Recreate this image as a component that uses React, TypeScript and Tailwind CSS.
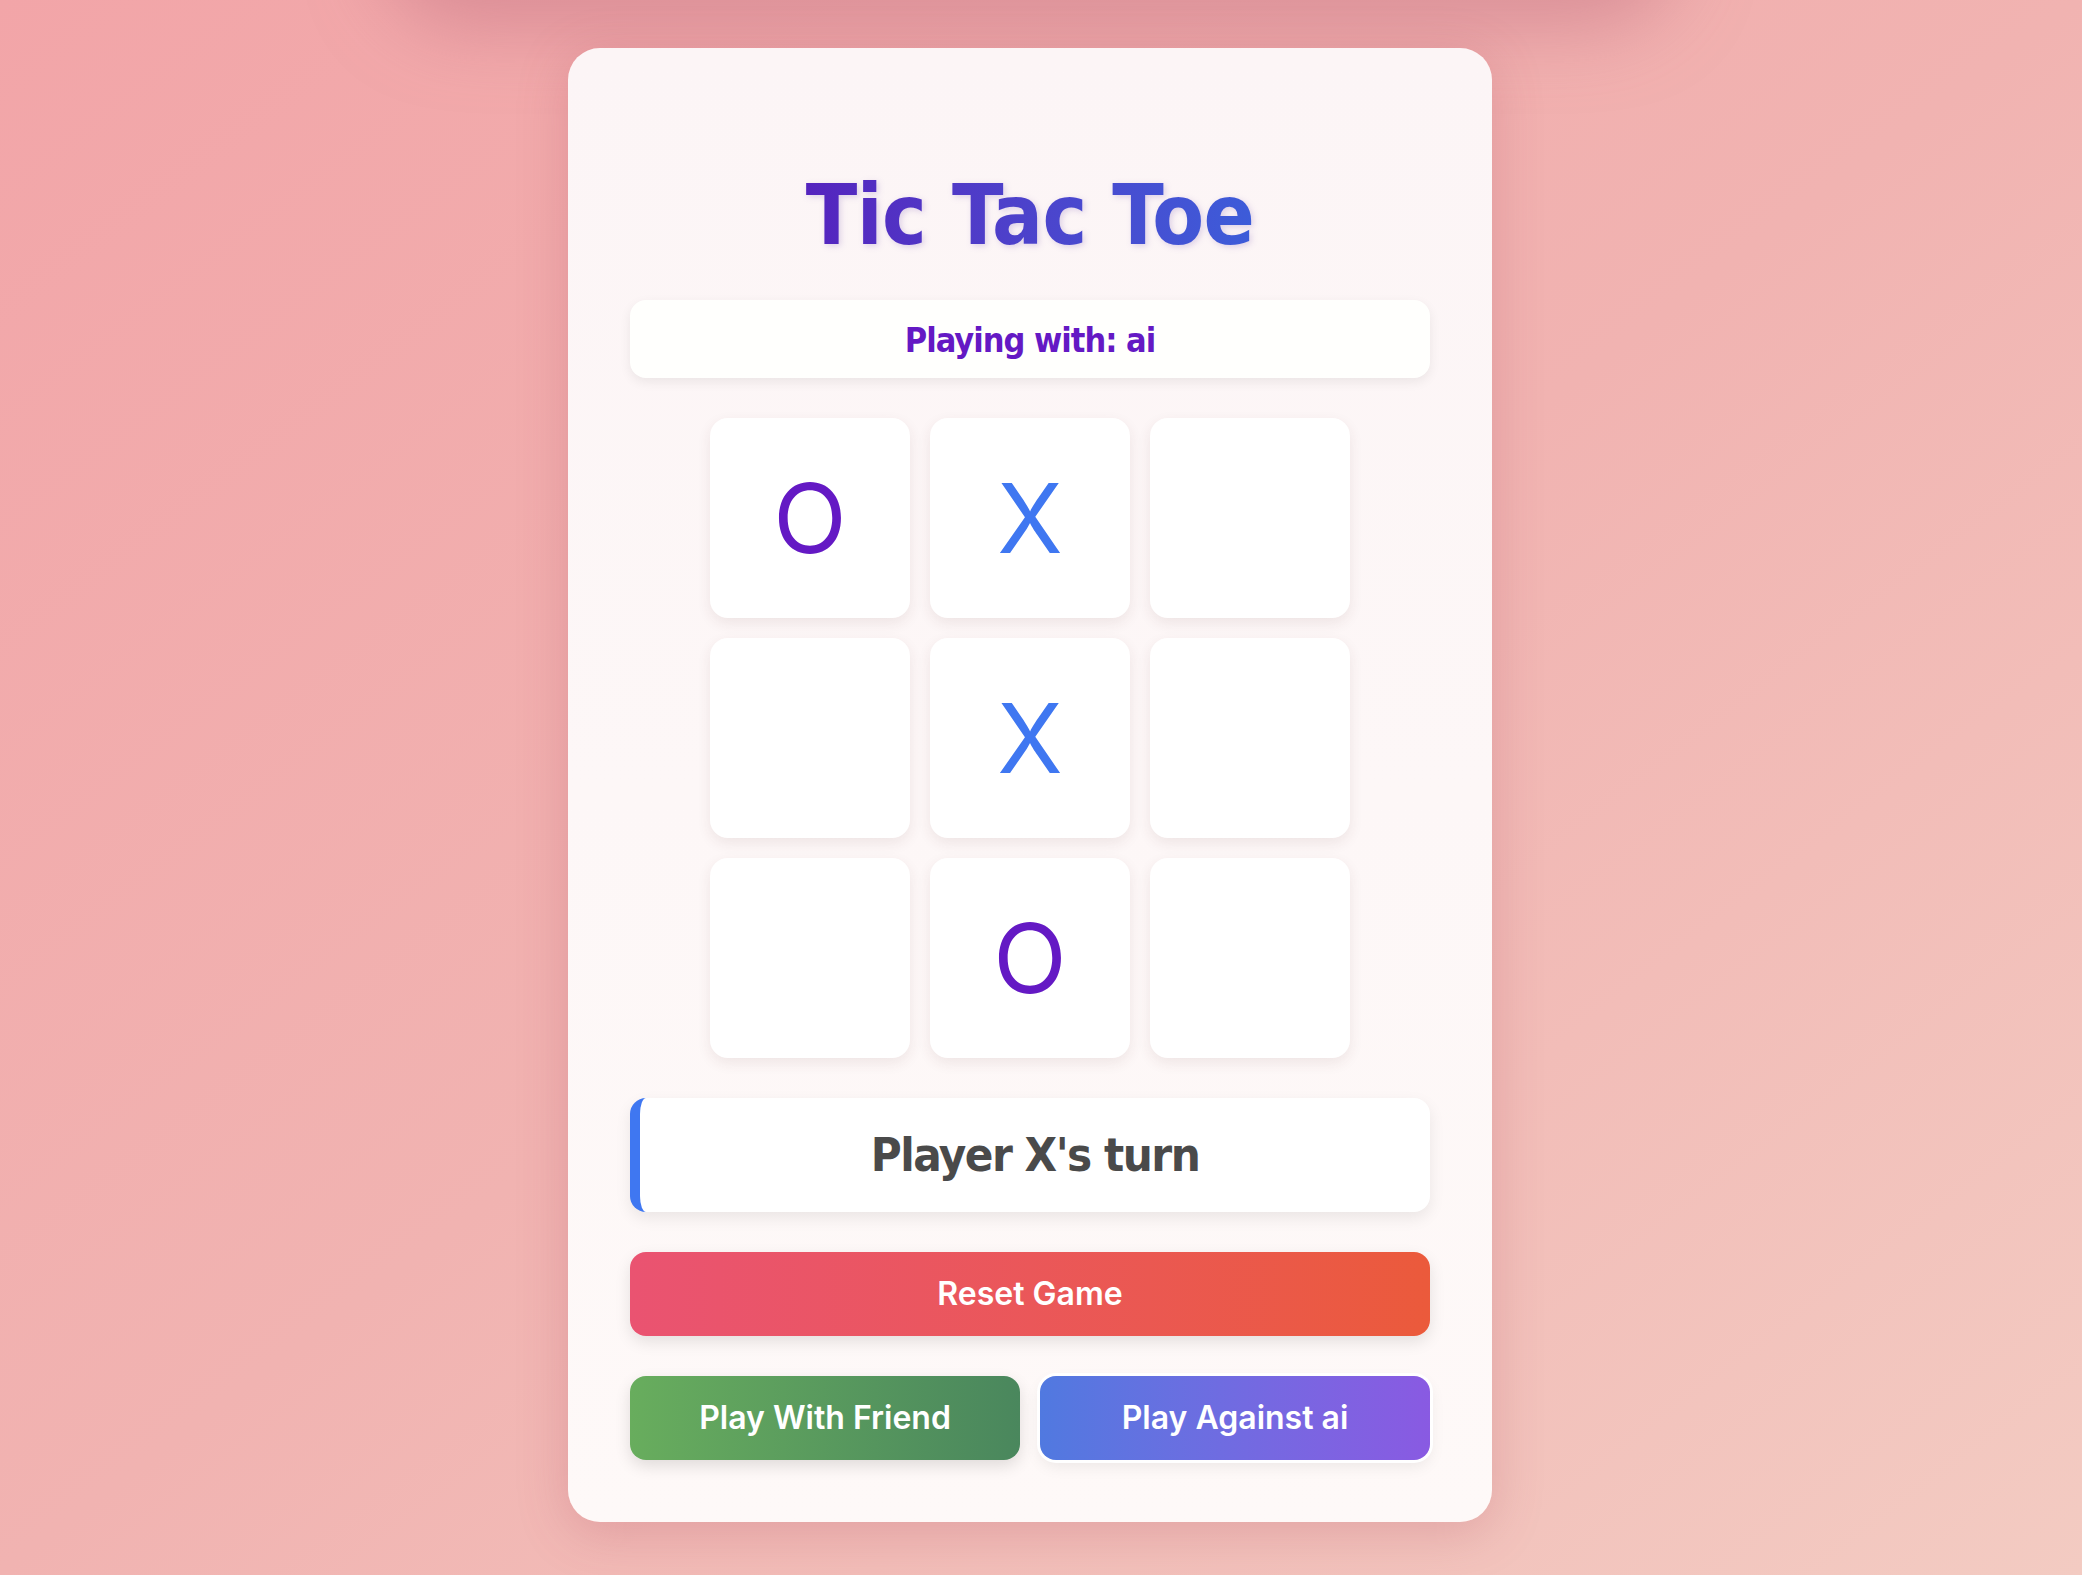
import { useState } from 'react';

type Cell = 'X' | 'O' | null;

const INITIAL_BOARD: Cell[] = ['O', 'X', null, null, 'X', null, null, 'O', null];

const TAHOMA = '[font-family:"DejaVu_Sans_Condensed","DejaVu_Sans",sans-serif] [font-stretch:87.5%]';

export default function App() {
  const [board, setBoard] = useState<Cell[]>(INITIAL_BOARD);
  const [mode, setMode] = useState<'friend' | 'ai'>('ai');
  const turn = board.filter(Boolean).length % 2 === 0 ? 'X' : 'O';

  const play = (i: number) => {
    if (board[i]) return;
    const next = [...board];
    next[i] = turn;
    setBoard(next);
  };

  return (
    <div className="relative min-h-screen w-full overflow-hidden bg-gradient-to-br from-[#f2a5a8] via-[#f1b3b1] to-[#f3cbc2] flex items-center justify-center pr-[22px] pb-[5px] [font-family:Inter,'Liberation_Sans',sans-serif]">
      {/* shadow from the bar above the viewport */}
      <div className="absolute -top-[110px] left-[420px] w-[1220px] h-[100px] rounded-full shadow-[0_0_70px_40px_rgba(200,120,135,0.55)]" />

      <div className="relative w-[924px] rounded-[32px] bg-gradient-to-b from-[#fcf5f6] to-[#fef9f8] p-[62px] shadow-[0_10px_50px_rgba(170,70,90,0.25)]">
        <h1 className={`${TAHOMA} mt-[56px] mb-[36px] text-center text-[84px] leading-[98px] font-bold tracking-[-0.6px]`}>
          <span className="inline-block bg-gradient-to-r from-[#5423be] to-[#3c5cd9] bg-clip-text text-transparent [filter:drop-shadow(2px_2px_3px_rgba(80,40,160,0.18))]">
            Tic Tac Toe
          </span>
        </h1>

        <div
          className={`${TAHOMA} rounded-[16px] bg-[#fffffd] pt-[20px] pb-[18px] text-center text-[34px] leading-[40px] font-bold tracking-[-1px] text-[#6419c4] shadow-[0_4px_12px_rgba(0,0,0,0.07)]`}
        >
          Playing with: {mode}
        </div>

        {/* Board */}
        <div className="mt-[40px] grid grid-cols-[repeat(3,200px)] justify-center gap-[20px]">
          {board.map((cell, i) => (
            <button
              key={i}
              onClick={() => play(i)}
              className={`h-[200px] rounded-[18px] bg-white flex items-center justify-center text-[96px] leading-none font-normal shadow-[0_5px_14px_rgba(90,40,40,0.09)] ${
                cell === 'X' ? 'text-[#3f77f1]' : 'text-[#6419c4]'
              }`}
            >
              {cell}
            </button>
          ))}
        </div>

        {/* Status */}
        <div className="mt-[40px] h-[114px] rounded-[16px] border-l-[10px] border-[#3f77f1] bg-white flex items-center justify-center shadow-[0_6px_16px_rgba(0,0,0,0.08)]">
          <span className={`${TAHOMA} text-[47px] font-bold tracking-[-1.5px] text-[#4a4a4a]`}>Player {turn}'s turn</span>
        </div>

        <button
          onClick={() => setBoard(Array(9).fill(null))}
          className="mt-[40px] h-[84px] w-full rounded-[16px] bg-gradient-to-r from-[#ea5371] to-[#eb5a3b] text-[32px] font-semibold text-white shadow-[0_6px_16px_rgba(0,0,0,0.1)]"
        >
          Reset Game
        </button>

        <div className="mt-[40px] grid grid-cols-2 gap-[20px]">
          <button
            onClick={() => setMode('friend')}
            className={`h-[84px] rounded-[16px] bg-gradient-to-r from-[#68ad5d] to-[#4a875d] text-[32px] font-semibold text-white shadow-[0_6px_16px_rgba(0,0,0,0.12)] ${
              mode === 'friend' ? 'ring-[3px] ring-white' : ''
            }`}
          >
            Play With Friend
          </button>
          <button
            onClick={() => setMode('ai')}
            className={`h-[84px] rounded-[16px] bg-gradient-to-r from-[#5079e0] to-[#895ae2] text-[32px] font-semibold text-white shadow-[0_6px_16px_rgba(0,0,0,0.08)] ${
              mode === 'ai' ? 'ring-[3px] ring-white' : ''
            }`}
          >
            Play Against ai
          </button>
        </div>
      </div>
    </div>
  );
}
